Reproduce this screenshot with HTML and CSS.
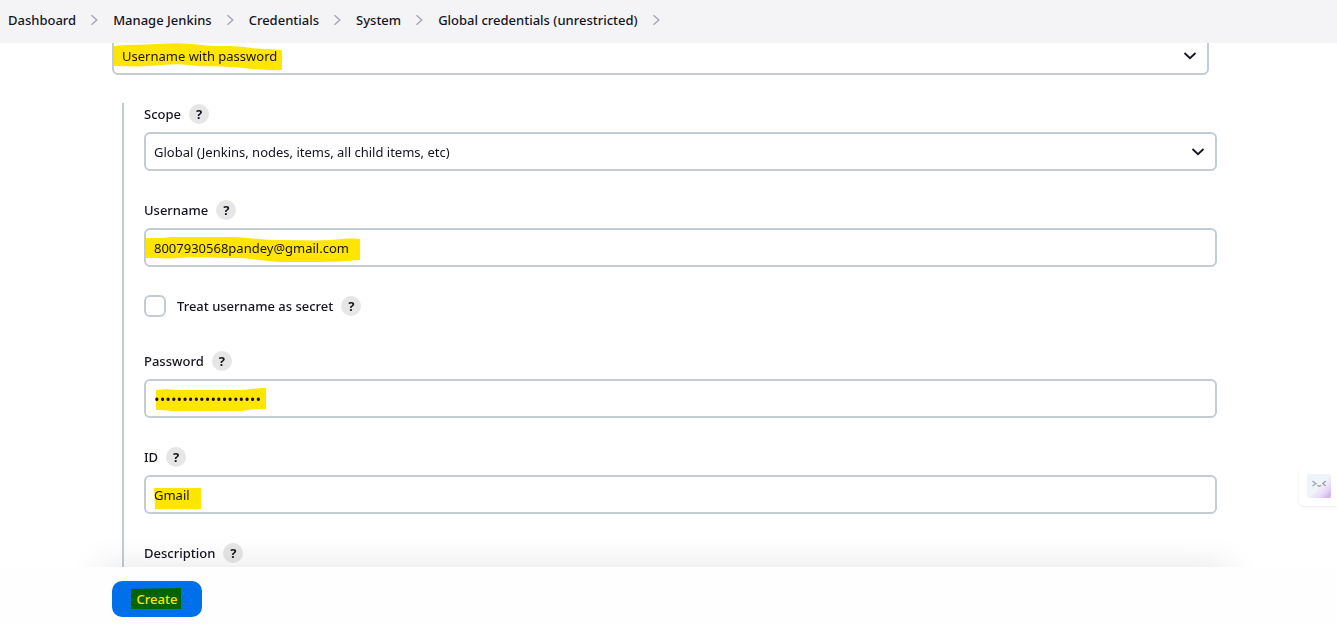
FILE: index.html
```html
<!DOCTYPE html>
<html lang="en">
<head>
<meta charset="utf-8">
<meta name="viewport" content="width=device-width, initial-scale=1">
<title>New credentials</title>
<link rel="stylesheet" href="styles.css">
</head>
<body>
<nav class="breadcrumbs" aria-label="Breadcrumb">
  <a href="#">Dashboard</a>
  <svg class="separator" viewBox="0 0 9 12"><path d="M1.5 1.2 6.8 6 1.5 10.8"/></svg>
  <a href="#">Manage Jenkins</a>
  <svg class="separator" viewBox="0 0 9 12"><path d="M1.5 1.2 6.8 6 1.5 10.8"/></svg>
  <a href="#">Credentials</a>
  <svg class="separator" viewBox="0 0 9 12"><path d="M1.5 1.2 6.8 6 1.5 10.8"/></svg>
  <a href="#">System</a>
  <svg class="separator" viewBox="0 0 9 12"><path d="M1.5 1.2 6.8 6 1.5 10.8"/></svg>
  <a href="#">Global credentials (unrestricted)</a>
  <svg class="separator" viewBox="0 0 9 12"><path d="M1.5 1.2 6.8 6 1.5 10.8"/></svg>
</nav>

<main class="content">
  <form id="credentials" class="form">
    <div class="control">
      <select class="field" aria-label="Kind"><option>Username with password</option></select>
      <svg class="chevron" viewBox="0 0 14 10"><path d="M1.5 2 7 7.2 12.5 2"/></svg>
      <svg class="marker marker-kind" viewBox="0 0 168 28"><path d="M0 3C14 1 28 2 42 1S72 0 88 2C104 4 116 2 130 4S152 6 168 7V27C148 28 134 25 118 24S86 24 74 22 48 22 36 23 12 23 0 23Z"/></svg>
    </div>

    <div class="nested">
      <div class="group">
        <div class="caption"><label for="scope">Scope</label><button type="button" class="help" aria-label="Help for Scope">?</button></div>
        <div class="control">
          <select class="field" id="scope"><option>Global (Jenkins, nodes, items, all child items, etc)</option></select>
          <svg class="chevron" viewBox="0 0 14 10"><path d="M1.5 2 7 7.2 12.5 2"/></svg>
        </div>
      </div>

      <div class="group">
        <div class="caption"><label for="username">Username</label><button type="button" class="help" aria-label="Help for Username">?</button></div>
        <div class="control">
          <input class="field" id="username" type="text" value="8007930568pandey@gmail.com">
          <svg class="marker marker-username" viewBox="0 0 214 26"><path d="M0 1C12 1 18 1 26 0H84C102 0 112 3 130 3S170 4 184 3 202 1 214 2V23C202 24 188 25 170 25H138C118 25 108 21 90 21S50 20 34 21 10 21 0 21Z"/></svg>
        </div>
      </div>

      <div class="caption check-row">
        <input class="checkbox" id="secret" type="checkbox"><label for="secret">Treat username as secret</label><button type="button" class="help" aria-label="Help for Treat username as secret">?</button>
      </div>

      <div class="group">
        <div class="caption"><label for="password">Password</label><button type="button" class="help" aria-label="Help for Password">?</button></div>
        <div class="control">
          <input class="field password" id="password" type="password" value="abcdefghijklmnopqrs">
          <svg class="marker marker-password" viewBox="0 0 110 24"><path d="M0 2C8 1 14 1 20 2H84C92 2 98 0 110 0V21C98 21 92 22 86 23H18C12 23 8 22 0 22Z"/></svg>
        </div>
      </div>

      <div class="group">
        <div class="caption"><label for="id">ID</label><button type="button" class="help" aria-label="Help for ID">?</button></div>
        <div class="control">
          <input class="field" id="id" type="text" value="Gmail">
          <svg class="marker marker-id" viewBox="0 0 47 22"><path d="M0 0H47V21H1Z"/></svg>
        </div>
      </div>

      <div class="group">
        <div class="caption"><label for="description">Description</label><button type="button" class="help" aria-label="Help for Description">?</button></div>
        <div class="control"><input class="field" id="description" type="text"></div>
      </div>
    </div>
  </form>
</main>

<footer class="bottom-bar">
  <div class="shade"></div>
  <div class="control">
    <button class="create" type="submit" form="credentials">Create</button>
    <svg class="marker marker-create" viewBox="0 0 50 22"><path d="M0 1 50 0V21H0Z"/></svg>
  </div>
</footer>

<button class="assistant" type="button" aria-label="Assistant">
  <svg viewBox="0 0 24 24">
    <defs><linearGradient id="tint" x1="0" y1="0" x2="1" y2="1"><stop offset="0.5" stop-color="#eff4f9"/><stop offset="0.72" stop-color="#e9dcf6"/><stop offset="1" stop-color="#cba6ea"/></linearGradient></defs>
    <rect width="24" height="24" rx="2" fill="url(#tint)"/>
    <path d="M5.5 7 8.8 9.5 5.5 12M18.7 7 15.8 9.5 18.7 12M10.3 11.3Q12.2 13 14 11.3" fill="none" stroke="#a5a5ad" stroke-width="1.5"/>
  </svg>
</button>
</body>
</html>
```
FILE: styles.css
```css
* {
  box-sizing: border-box;
}

body {
  display: flex;
  flex-direction: column;
  height: 100vh;
  margin: 0;
  overflow: hidden;
  background: #fff;
  color: #14141f;
  font: 500 13px/20px "Noto Sans", "Open Sans", sans-serif;
}

.breadcrumbs {
  position: relative;
  z-index: 2;
  display: flex;
  flex: none;
  align-items: center;
  gap: 14px;
  height: 43px;
  padding: 0 8px 3px;
  background: #f4f4f7;
}

.breadcrumbs a {
  color: inherit;
  text-decoration: none;
  white-space: nowrap;
}

.separator {
  flex: none;
  width: 9px;
  height: 12px;
  fill: none;
  stroke: #a7a7b8;
  stroke-width: 1.5;
}

.content {
  flex: 1;
  min-height: 0;
  margin-top: -7px;
  overflow: hidden;
}

.form {
  padding: 0 128px 0 112px;
}

.nested {
  display: flex;
  flex-direction: column;
  gap: 29px;
  margin: 28px -8px 0 10px;
  padding-left: 20px;
  border-left: 2px solid #c3ccd1;
}

.group {
  display: flex;
  flex-direction: column;
  gap: 8px;
}

.group:first-child {
  padding-top: 1px;
}

.caption {
  display: flex;
  align-items: center;
  gap: 8px;
}

.check-row {
  height: 22px;
  margin: -1px 0 5px;
}

.help {
  width: 20px;
  height: 20px;
  padding: 0;
  border: 0;
  border-radius: 50%;
  background: #e6e6e6;
  color: #14141f;
  font: 700 13px/20px "Noto Sans", sans-serif;
}

.control {
  position: relative;
}

.field {
  display: block;
  width: 100%;
  height: 39px;
  margin: 0;
  padding: 0 8px;
  border: 2px solid #c3ccd1;
  border-radius: 6px;
  appearance: none;
  background: #fff;
  color: #14141f;
  font: 400 13px/20px "Noto Sans", "Open Sans", sans-serif;
}

.password {
  font-family: "Open Sans", sans-serif;
  font-size: 15px;
}

.chevron {
  position: absolute;
  top: 15px;
  right: 12px;
  width: 14px;
  height: 10px;
  fill: none;
  stroke: #14141f;
  stroke-width: 1.8;
  pointer-events: none;
}

.checkbox {
  width: 22px;
  height: 22px;
  margin: 0 3px 0 0;
  border: 2px solid #c3ccd1;
  border-radius: 6px;
  appearance: none;
  background: #fff;
}

.marker {
  position: absolute;
  fill: #ffe600;
  mix-blend-mode: multiply;
  pointer-events: none;
}

.marker-kind {
  top: 7px;
  left: 2px;
  width: 168px;
  height: 28px;
}

.marker-username {
  top: 9px;
  left: 2px;
  width: 214px;
  height: 26px;
}

.marker-password {
  top: 9px;
  left: 12px;
  width: 110px;
  height: 24px;
}

.marker-id {
  top: 13px;
  left: 10px;
  width: 47px;
  height: 22px;
}

.marker-create {
  top: 7px;
  left: 19px;
  width: 50px;
  height: 22px;
}

.bottom-bar {
  position: relative;
  display: flex;
  flex: none;
  padding: 14px 120px 7px 112px;
  background: #fefefe;
}

.shade {
  position: absolute;
  right: 0;
  bottom: 100%;
  left: 0;
  height: 40px;
  padding: 40px 108px 0 100px;
  overflow: hidden;
  pointer-events: none;
}

.shade::before {
  display: block;
  height: 60px;
  box-shadow: 0 0 36px rgba(0, 0, 0, 0.11);
  content: "";
}

.create {
  width: 90px;
  height: 36px;
  padding: 0;
  border: 0;
  border-radius: 10px;
  background: #0070ea;
  color: #fff;
  font: 500 13px/20px "Noto Sans", sans-serif;
}

.assistant {
  position: absolute;
  top: 466px;
  right: 0;
  width: 38px;
  height: 40px;
  padding: 8px 6px 8px 8px;
  border: 0;
  border-radius: 6px 0 0 6px;
  background: #fff;
  box-shadow: 0 1px 3px rgba(0, 0, 0, 0.08);
}

.assistant svg {
  display: block;
  width: 24px;
  height: 24px;
}
```
